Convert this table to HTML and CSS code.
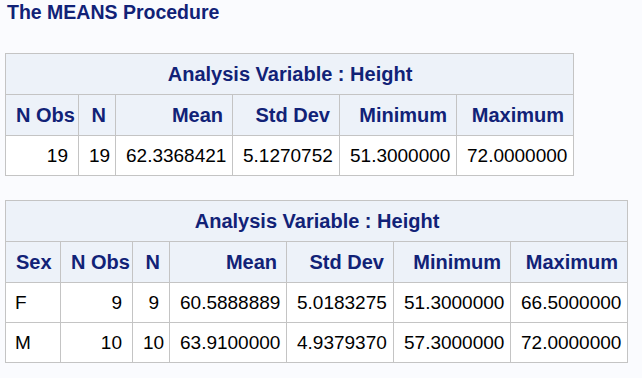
FILE: index.html
```html
<!DOCTYPE html>
<html lang="en">
<head>
<meta charset="utf-8">
<title>The MEANS Procedure</title>
<link rel="stylesheet" href="styles.css">
</head>
<body>
<h1 class="proc-title">The MEANS Procedure</h1>

<table class="sas-table t1">
  <colgroup>
    <col class="c-nobs"><col class="c-n"><col class="c-wide"><col class="c-std"><col class="c-wide"><col class="c-wide">
  </colgroup>
  <thead>
    <tr class="hrow"><th class="span-head" colspan="6">Analysis Variable : Height</th></tr>
    <tr class="hrow">
      <th>N Obs</th><th>N</th><th>Mean</th><th>Std Dev</th><th>Minimum</th><th>Maximum</th>
    </tr>
  </thead>
  <tbody>
    <tr class="drow">
      <td>19</td><td>19</td><td>62.3368421</td><td>5.1270752</td><td>51.3000000</td><td>72.0000000</td>
    </tr>
  </tbody>
</table>

<table class="sas-table t2">
  <colgroup>
    <col class="c-sex"><col class="c-nobs2"><col class="c-n"><col class="c-wide"><col class="c-std"><col class="c-wide"><col class="c-wide">
  </colgroup>
  <thead>
    <tr class="hrow"><th class="span-head" colspan="7">Analysis Variable : Height</th></tr>
    <tr class="hrow">
      <th class="left">Sex</th><th>N Obs</th><th>N</th><th>Mean</th><th>Std Dev</th><th>Minimum</th><th>Maximum</th>
    </tr>
  </thead>
  <tbody>
    <tr class="drow">
      <th class="rowhead">F</th><td>9</td><td>9</td><td>60.5888889</td><td>5.0183275</td><td>51.3000000</td><td>66.5000000</td>
    </tr>
    <tr class="drow">
      <th class="rowhead">M</th><td>10</td><td>10</td><td>63.9100000</td><td>4.9379370</td><td>57.3000000</td><td>72.0000000</td>
    </tr>
  </tbody>
</table>
</body>
</html>
```
FILE: styles.css
```css
html, body {
  margin: 0;
  padding: 0;
}
body {
  background: #fafbfe;
  font-family: "Liberation Sans", Arial, sans-serif;
  color: #000;
  padding: 1px 0 0 5px;
}
.proc-title {
  margin: 0 0 29px 2px;
  font-size: 19.5px;
  line-height: 23px;
  font-weight: bold;
  color: #112277;
}
.sas-table {
  border-collapse: separate;
  border-spacing: 0;
  table-layout: fixed;
  border-top: 1px solid #c4c4c4;
  border-left: 1px solid #c4c4c4;
  font-size: 19px;
}
.t1 { width: 569px; }
.t2 { width: 623px; margin-top: 24px; }
.c-nobs { width: 73px; }
.c-nobs2 { width: 72px; }
.c-sex { width: 55px; }
.c-n { width: 37px; }
.c-wide { width: 117px; }
.c-std { width: 107px; }
.sas-table th,
.sas-table td {
  box-sizing: border-box;
  border-right: 1px solid #c4c4c4;
  border-bottom: 1px solid #c4c4c4;
  padding: 0 10px 0 10px;
  text-align: right;
  vertical-align: middle;
  white-space: nowrap;
  overflow: hidden;
}
.sas-table th {
  background: #edf2f9;
  color: #112277;
  font-weight: bold;
  font-size: 20px;
  padding-right: 9px;
}
.hrow { height: 41px; }
.drow { height: 40px; }
.sas-table th.span-head { text-align: center; }
.sas-table th.left { text-align: left; }
.sas-table th.rowhead {
  background: #fff;
  color: #000;
  font-weight: normal;
  font-size: 19px;
  text-align: left;
  padding-left: 9px;
}
.sas-table td { background: #fff; }
```
